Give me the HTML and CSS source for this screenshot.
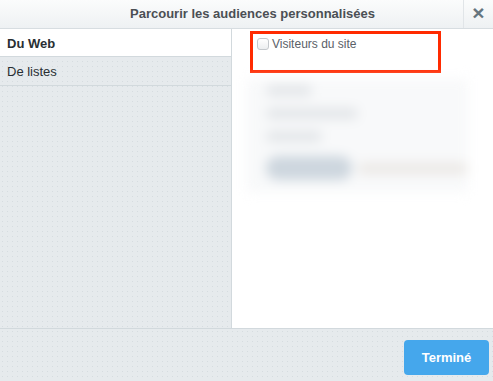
FILE: index.html
```html
<!DOCTYPE html>
<html lang="fr">
<head>
  <meta charset="UTF-8">
  <title>Parcourir les audiences personnalisées</title>
  <link rel="stylesheet" href="styles.css">
</head>
<body>
<div class="dialog">
  <header class="dialog-header">
    <div class="dialog-title">Parcourir les audiences personnalisées</div>
    <a href="javascript:void(0)" class="close-btn">&times;</a>
  </header>
  <div class="dialog-body">
    <ul class="source-list">
      <li class="selected">Du Web</li>
      <li>De listes</li>
    </ul>
    <div class="audiences">
      <div class="highlight">
        <label class="audience"><span class="check"></span>Visiteurs du site</label>
      </div>
      <div class="blurred">
        <span class="blob b1"></span>
        <span class="blob b2"></span>
        <span class="blob b3"></span>
        <div class="blob-row">
          <span class="blob b4"></span>
          <span class="blob b5"></span>
        </div>
      </div>
    </div>
  </div>
  <footer class="dialog-footer">
    <button type="button" class="done-btn">Terminé</button>
  </footer>
</div>
</body>
</html>
```

FILE: styles.css
```css
*{
  box-sizing: border-box;
}
body{
  margin: 0;
  padding: 0;
  font-family: "Liberation Sans", Arial, Helvetica, sans-serif;
  color: #333;
}
.dialog{
  width: 493px;
  height: 381px;
  display: flex;
  flex-direction: column;
  background: #fff;
  overflow: hidden;
}
.dialog-header{
  height: 29px;
  flex: 0 0 29px;
  display: flex;
  align-items: stretch;
  background: linear-gradient(#fbfcfc, #eef1f3);
  border-bottom: 1px solid #d7dde1;
}
.dialog-title{
  flex: 1;
  text-align: center;
  line-height: 27px;
  font-size: 13px;
  font-weight: bold;
  color: #4b4f54;
  padding-left: 42px;
}
.close-btn{
  width: 30px;
  border-left: 1px solid #e1e5e8;
  text-align: center;
  text-decoration: none;
  color: #66757f;
  font-weight: bold;
  font-size: 21px;
  line-height: 26px;
}
.dialog-body{
  flex: 1;
  display: flex;
}
.source-list{
  width: 232px;
  margin: 0;
  padding: 0;
  list-style: none;
  background-color: #e6eaed;
  background-image: radial-gradient(#d6dce0 0.5px, transparent 0.8px);
  background-size: 5px 5px;
  border-right: 1px solid #d2d9dd;
}
.source-list li{
  height: 29px;
  line-height: 29px;
  padding-left: 7px;
  font-size: 13px;
  color: #292f33;
  border-bottom: 1px solid #d2d9dd;
}
.source-list li.selected{
  background: #fff;
  font-weight: bold;
  height: 28px;
}
.audiences{
  flex: 1;
  padding: 2px 0 0 18px;
}
.highlight{
  width: 191px;
  height: 42px;
  border: 3px solid #ff2a00;
  padding: 3px 0 0 4px;
}
.audience{
  display: flex;
  align-items: flex-start;
  font-size: 12px;
  color: #5a6168;
}
.check{
  width: 12px;
  height: 12px;
  margin: 1px 3px 0 0;
  border: 1px solid #c4c8cc;
  border-radius: 3px;
  background: linear-gradient(#fff, #eceef0);
}
.blurred{
  margin: 6px 0 0 -4px;
  width: 222px;
  padding: 6px 0 12px 20px;
  background: #f8f9fa;
  filter: blur(6px);
  display: flex;
  flex-direction: column;
  gap: 12px;
}
.blob{
  display: block;
  height: 11px;
  border-radius: 6px;
  background: #e2e5e8;
}
.b1{ width: 46px; }
.b2{ width: 92px; }
.b3{ width: 56px; }
.blob-row{
  display: flex;
  gap: 6px;
  margin-top: 2px;
}
.b4{
  width: 88px;
  height: 24px;
  border-radius: 12px;
  background: #cdd6de;
}
.b5{
  width: 112px;
  margin-top: 7px;
  background: #ebe8e5;
}
.dialog-footer{
  height: 53px;
  flex: 0 0 53px;
  border-top: 1px solid #d2d9dd;
  background-color: #e6eaed;
  background-image: radial-gradient(#d6dce0 0.5px, transparent 0.8px);
  background-size: 5px 5px;
  display: flex;
  justify-content: flex-end;
  align-items: flex-start;
  padding: 11px 4px 0 0;
}
.done-btn{
  width: 85px;
  height: 35px;
  border: 0;
  border-radius: 4px;
  background: #45a7ec;
  color: #fff;
  font-family: inherit;
  font-size: 13px;
  font-weight: bold;
  cursor: pointer;
}
```
